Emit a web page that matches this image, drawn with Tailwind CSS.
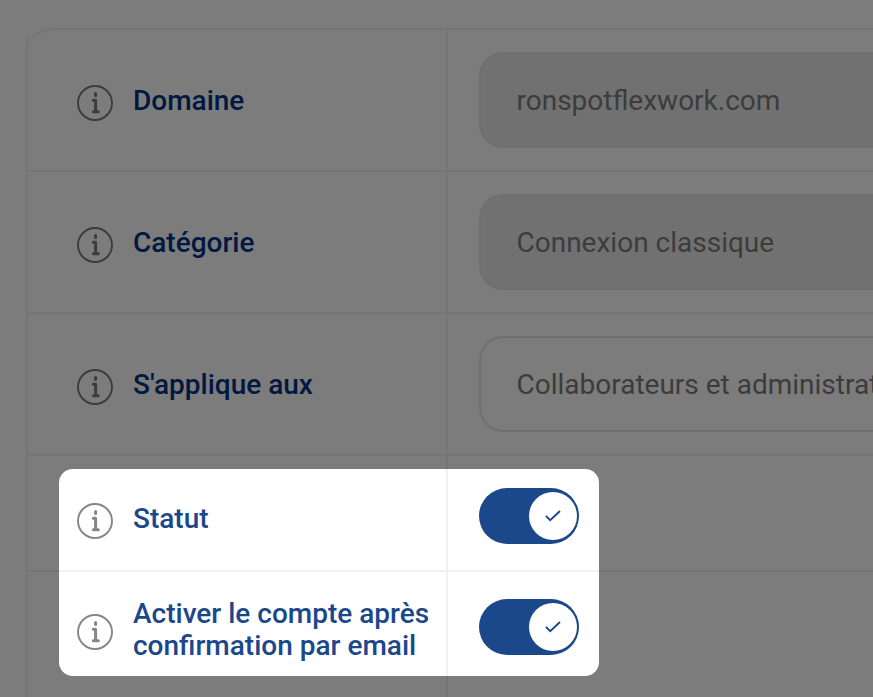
<!DOCTYPE html>
<html lang="fr">
<head>
  <!-- Meta Settings -->
  <meta charset="UTF-8" />
  <meta name="viewport" content="width=device-width, initial-scale=1.0" />
  <title>Domaine</title>

  <!-- Tailwind CSS -->
  <script src="https://cdn.jsdelivr.net/npm/@tailwindcss/browser@4"></script>
</head>

<body class="relative h-screen overflow-hidden bg-white pl-[26px] pt-7 font-['Roboto',sans-serif] text-[28px] leading-8">

  <!-- Shared icons -->
  <svg class="hidden">
    <symbol id="info" viewBox="0 0 36 36">
      <circle cx="18" cy="18" r="17" fill="none" stroke="currentColor" stroke-width="1.9" />
      <path d="M18.6 8.5v2M16.3 15.3h2.3v11.3M16.4 26.7h4.9" fill="none" stroke="currentColor" stroke-width="3" stroke-linecap="round" stroke-linejoin="round" />
    </symbol>
    <symbol id="check" viewBox="0 0 16 12">
      <path d="M.9 5.9L5.2 10.2L15 1" fill="none" stroke="currentColor" stroke-width="1.9" />
    </symbol>
  </svg>

  <!-- Settings Table -->
  <main class="relative w-[900px] border-l-2 border-t-2 border-[#f1f1f1]">

    <!-- Table corner -->
    <svg class="absolute -left-0.5 -top-0.5 h-4 w-7 bg-white text-[#f1f1f1]" viewBox="0 0 28 16" fill="none" stroke="currentColor" stroke-width="2">
      <path d="M28 1h-2C18.500 1 12.500 4 7.500 9M5 10C3 11 1 13.500 1 16" />
    </svg>

    <!-- Domain -->
    <div class="flex h-[142px] border-b-2 border-[#f1f1f1]">
      <div class="flex w-[420px] shrink-0 items-center gap-5 border-r-2 border-[#f1f1f1] pl-[49px]">
        <svg class="mt-1.5 size-9 shrink-0 text-[#7c7c7c]"><use href="#info" /></svg>
        <span class="pt-0.5 font-medium text-[#033485]">Domaine</span>
      </div>
      <div class="flex flex-1 items-center pl-[31px]">
        <div class="flex h-24 w-full items-center rounded-3xl border-2 border-[#e5e5e5] bg-[#e9e9e9] pl-[35.5px] pt-0.5 text-[#7c7c7c]">ronspotflexwork.com</div>
      </div>
    </div>

    <!-- Category -->
    <div class="flex h-[142px] border-b-2 border-[#f1f1f1]">
      <div class="flex w-[420px] shrink-0 items-center gap-5 border-r-2 border-[#f1f1f1] pl-[49px]">
        <svg class="mt-1.5 size-9 shrink-0 text-[#7c7c7c]"><use href="#info" /></svg>
        <span class="pt-0.5 font-medium text-[#033485]">Catégorie</span>
      </div>
      <div class="flex flex-1 items-center pl-[31px]">
        <div class="flex h-24 w-full items-center rounded-3xl border-2 border-[#e5e5e5] bg-[#e9e9e9] pl-[35.5px] pt-0.5 text-[#7c7c7c]">Connexion classique</div>
      </div>
    </div>

    <!-- Applies to -->
    <div class="flex h-[142px] border-b-2 border-[#f1f1f1]">
      <div class="flex w-[420px] shrink-0 items-center gap-5 border-r-2 border-[#f1f1f1] pl-[49px]">
        <svg class="mt-1.5 size-9 shrink-0 text-[#7c7c7c]"><use href="#info" /></svg>
        <span class="pt-0.5 font-medium text-[#033485]">S'applique aux</span>
      </div>
      <div class="flex flex-1 items-center pl-[31px]">
        <div class="flex h-24 w-full items-center whitespace-nowrap rounded-3xl border-2 border-[#e5e5e5] pl-[35.5px] pt-0.5 text-[#7c7c7c]">Collaborateurs et administrateurs</div>
      </div>
    </div>

    <!-- Status -->
    <div class="flex h-[116px] border-b-2 border-[#f1f1f1]">
      <div class="flex w-[420px] shrink-0 items-start gap-5 border-r-2 border-[#f1f1f1] pl-[49px] pt-[47px]">
        <svg class="size-9 shrink-0 text-[#868686]"><use href="#info" /></svg>
        <span class="font-medium text-[#1b478b]">Statut</span>
      </div>
      <div class="flex flex-1 items-start pl-[31px] pt-8">
        <div class="flex h-14 w-[100px] items-center justify-end rounded-full bg-[#1b478b] pr-0.5">
          <div class="flex size-12 items-center justify-center rounded-full bg-white text-[#1b478b]">
            <svg class="h-3 w-4"><use href="#check" /></svg>
          </div>
        </div>
      </div>
    </div>

    <!-- Account activation -->
    <div class="flex h-[142px]">
      <div class="flex w-[420px] shrink-0 items-start gap-5 border-r-2 border-[#f1f1f1] pl-[49px] pt-[26px]">
        <svg class="mt-4 size-9 shrink-0 text-[#868686]"><use href="#info" /></svg>
        <span class="font-medium text-[#1b478b]">Activer le compte après<br />confirmation par email</span>
      </div>
      <div class="flex flex-1 items-start pl-[31px] pt-[27px]">
        <div class="flex h-14 w-[100px] items-center justify-end rounded-full bg-[#1b478b] pr-0.5">
          <div class="flex size-12 items-center justify-center rounded-full bg-white text-[#1b478b]">
            <svg class="h-3 w-4"><use href="#check" /></svg>
          </div>
        </div>
      </div>
    </div>
  </main>

  <!-- Spotlight -->
  <div class="absolute left-[59px] top-[469px] h-[207px] w-[540px] rounded-[14px] shadow-[0_0_0_1000px_rgba(0,0,0,0.515)]"></div>
</body>
</html>
